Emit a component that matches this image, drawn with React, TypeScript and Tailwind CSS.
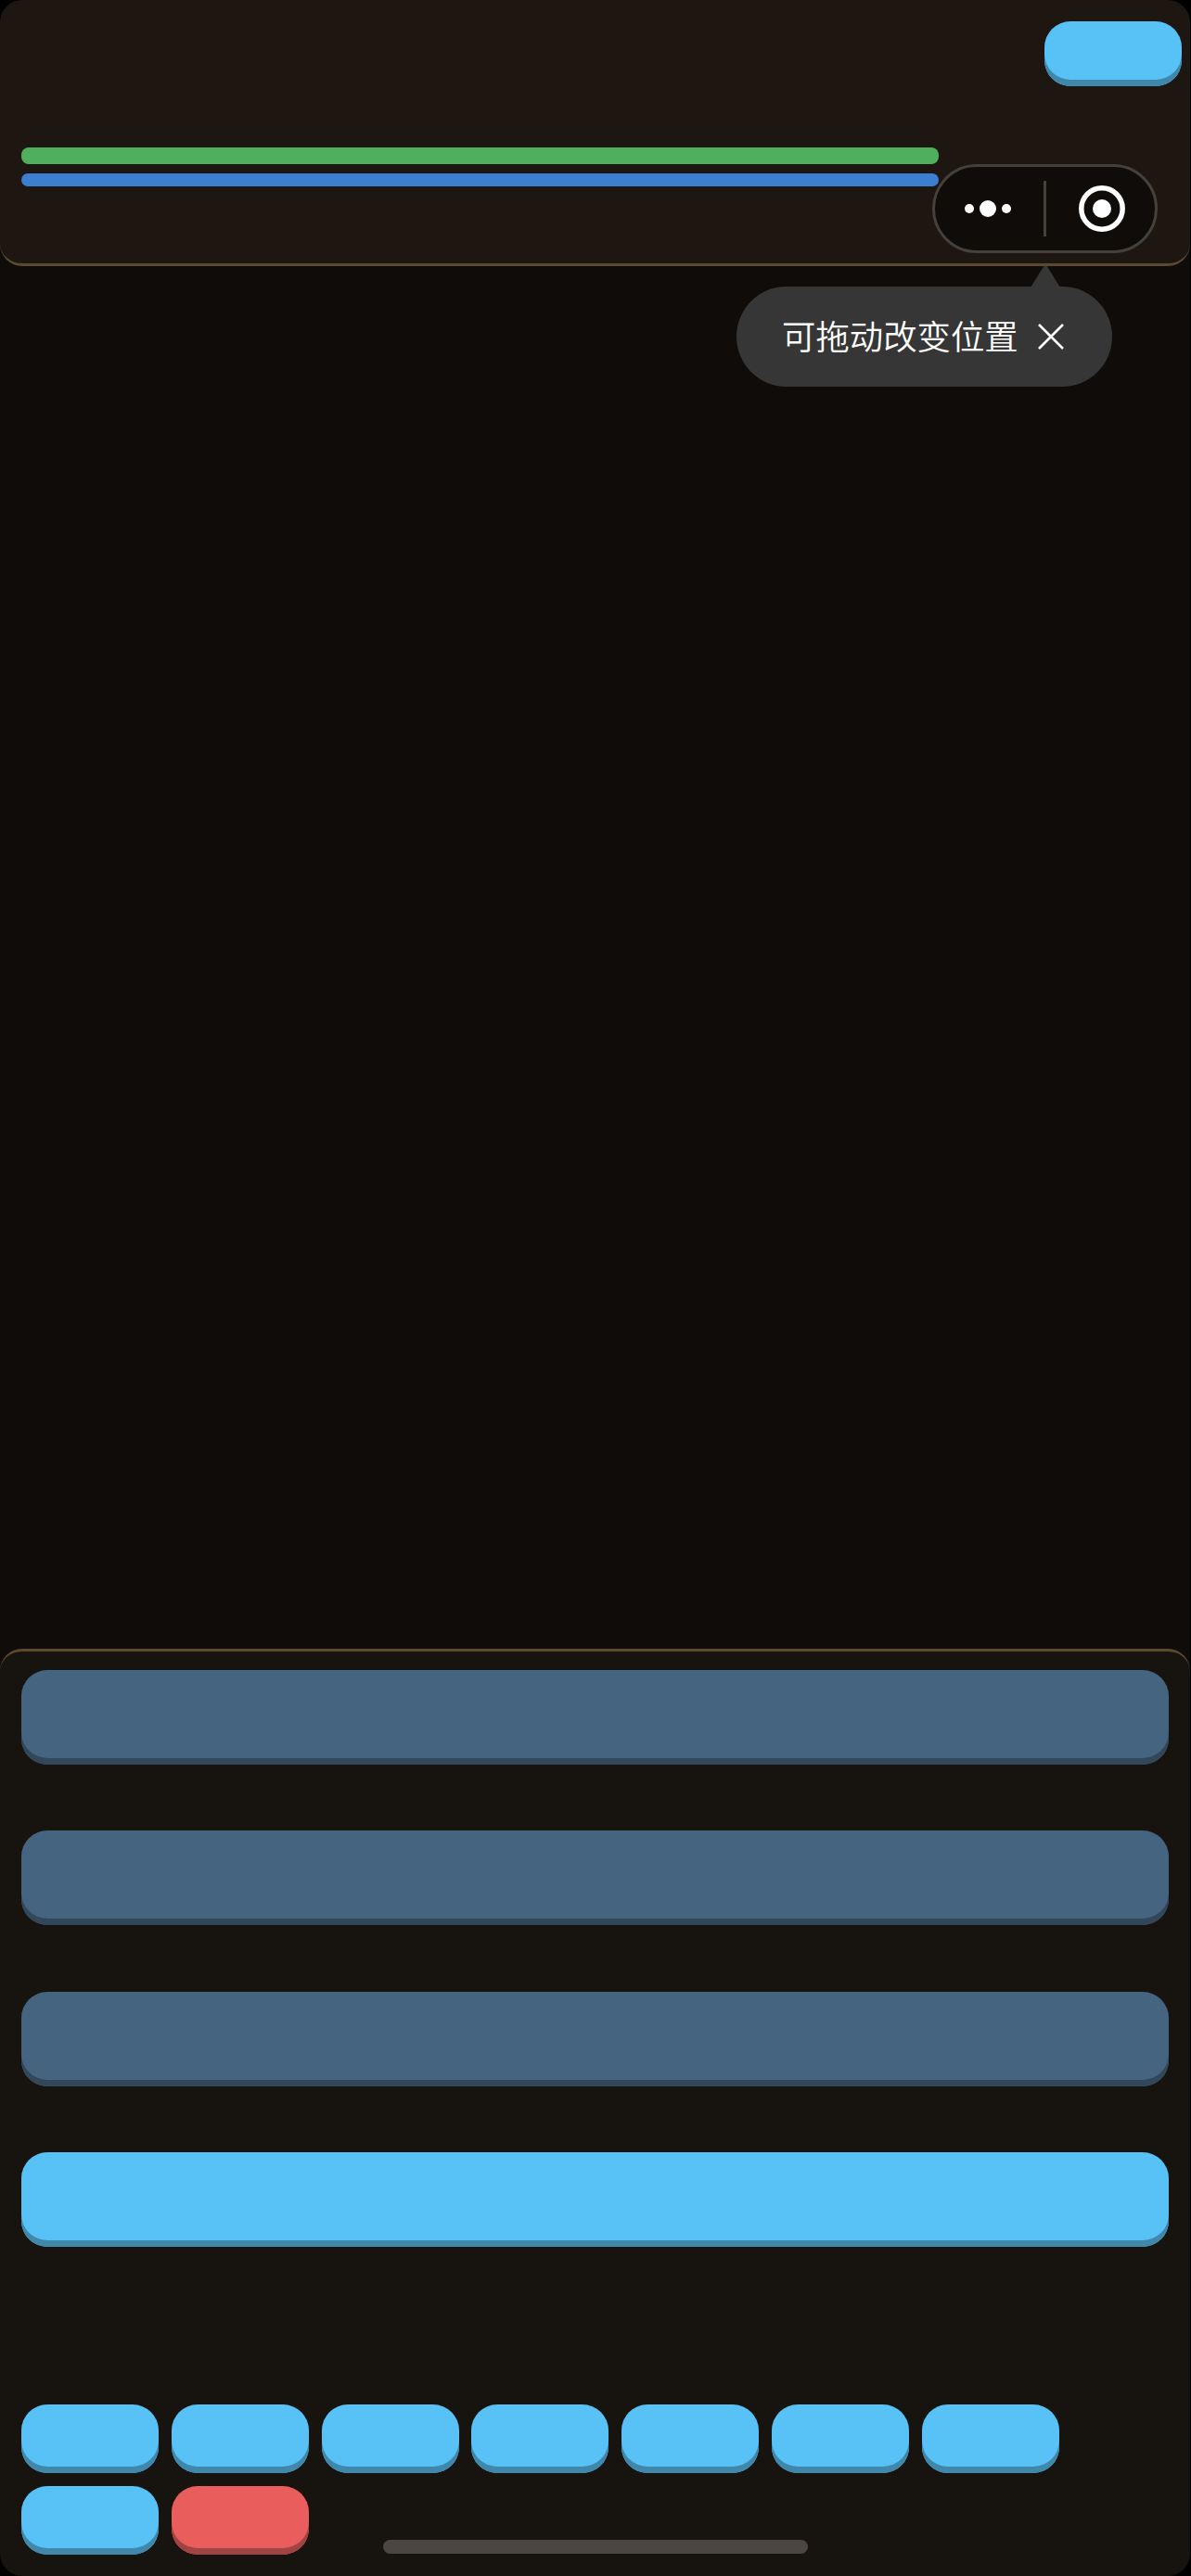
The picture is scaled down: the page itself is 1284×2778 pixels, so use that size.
const keyTones = {
  sky: "bg-[#58c2f7] shadow-[inset_0_-7px_0_#3f88ab]",
  slate: "bg-[#456480] shadow-[inset_0_-7px_0_#33475a]",
  red: "bg-[#e95d5d] shadow-[inset_0_-7px_0_#9f4443]",
};

type Tone = keyof typeof keyTones;

function SmallKey({ tone = "sky" }: { tone?: Tone }) {
  return <button className={`h-[74px] w-[148px] rounded-[28px] ${keyTones[tone]}`} />;
}

function WideKey({ tone }: { tone: Tone }) {
  return <button className={`h-[102px] w-[1237px] rounded-[28px] ${keyTones[tone]}`} />;
}

function Capsule() {
  return (
    <div className="absolute left-[1005px] top-[177px] flex h-[96px] w-[243px] items-center rounded-full border-[3px] border-[#45403a] bg-[#100c09]">
      <div className="flex flex-1 items-center justify-center pr-[3px]">
        <svg width="50" height="20" viewBox="0 0 50 20" fill="#fff">
          <circle cx="5" cy="10" r="5" />
          <circle cx="25" cy="10" r="9" />
          <circle cx="45" cy="10" r="5" />
        </svg>
      </div>
      <div className="h-[60px] w-[3px] bg-[#45403a]" />
      <div className="flex flex-1 items-center justify-center pl-[3px]">
        <svg width="50" height="50" viewBox="0 0 50 50">
          <circle cx="25" cy="25" r="22.2" fill="none" stroke="#fff" strokeWidth="5.5" />
          <circle cx="25" cy="25" r="10" fill="#fff" />
        </svg>
      </div>
    </div>
  );
}

function DragTip() {
  return (
    <div className="absolute left-[794px] top-[309px] flex h-[108px] w-[405px] items-center rounded-[54px] bg-[#363636] pl-[49px] font-['Noto_Sans_CJK_SC',sans-serif] text-[36.4px] font-[350] text-white">
      <svg className="absolute left-[316px] top-[-23px]" width="34" height="24" viewBox="0 0 34 24" fill="#363636">
        <path d="M1 24 L15 1.5 Q17 -0.5 19 1.5 L33 24 Z" />
      </svg>
      <span className="-mt-[4px] whitespace-nowrap leading-none">可拖动改变位置</span>
      <svg className="ml-[21px]" width="28" height="28" viewBox="0 0 28 28" stroke="#fff" strokeWidth="2.6" fill="none">
        <path d="M1 1 L27 27 M27 1 L1 27" />
      </svg>
    </div>
  );
}

export default function App() {
  return (
    <div className="relative h-[2778px] w-[1284px] overflow-hidden bg-black">
      <div className="flex h-full w-[1283px] flex-col justify-between overflow-hidden rounded-[24px] bg-[#100c09]">
        <header className="h-[287px] rounded-[24px] border-b-[3px] border-[#5c4a2f] bg-[#1e1711] pl-[23px] pr-[9px] pt-[23px]">
          <div className="flex justify-end">
            <button className={`h-[70px] w-[148px] rounded-[28px] ${keyTones.sky}`} />
          </div>
          <div className="mt-[66px] flex w-[989px] flex-col gap-[10px]">
            <div className="h-[18px] rounded-[8px] bg-[#50ae5f]" />
            <div className="h-[14px] rounded-[7px] bg-[#3c7ed0]" />
          </div>
        </header>

        <section className="h-[1000px] rounded-[24px] border-t-[3px] border-[#5c4a2f] bg-[#17140f] pl-[23px] pt-[20px]">
          <div className="flex flex-col gap-[71.33px]">
            <WideKey tone="slate" />
            <WideKey tone="slate" />
            <WideKey tone="slate" />
            <WideKey tone="sky" />
          </div>
          <div className="mt-[170px] flex w-[1237px] flex-wrap gap-x-[13.75px] gap-y-[14px]">
            {Array.from({ length: 8 }, (_, i) => (
              <SmallKey key={i} />
            ))}
            <SmallKey tone="red" />
          </div>
        </section>
      </div>

      <Capsule />
      <DragTip />
      <div className="absolute bottom-[24px] left-[413px] h-[15px] w-[458px] rounded-full bg-[#4b4642]" />
    </div>
  );
}
